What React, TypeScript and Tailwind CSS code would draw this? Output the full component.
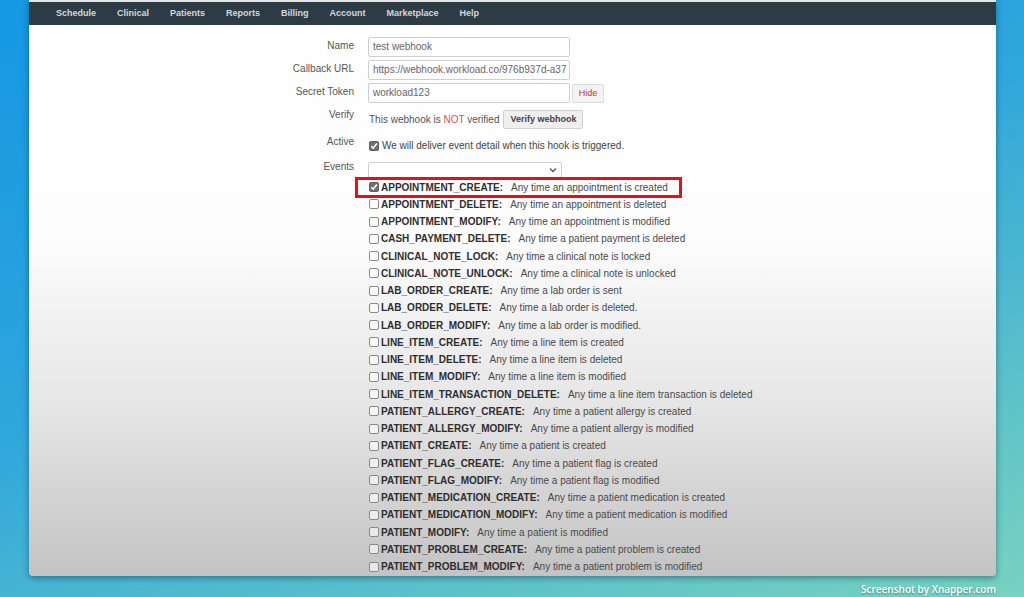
import React from "react";

const events: [string, string][] = [
  ["APPOINTMENT_CREATE", "Any time an appointment is created"],
  ["APPOINTMENT_DELETE", "Any time an appointment is deleted"],
  ["APPOINTMENT_MODIFY", "Any time an appointment is modified"],
  ["CASH_PAYMENT_DELETE", "Any time a patient payment is deleted"],
  ["CLINICAL_NOTE_LOCK", "Any time a clinical note is locked"],
  ["CLINICAL_NOTE_UNLOCK", "Any time a clinical note is unlocked"],
  ["LAB_ORDER_CREATE", "Any time a lab order is sent"],
  ["LAB_ORDER_DELETE", "Any time a lab order is deleted."],
  ["LAB_ORDER_MODIFY", "Any time a lab order is modified."],
  ["LINE_ITEM_CREATE", "Any time a line item is created"],
  ["LINE_ITEM_DELETE", "Any time a line item is deleted"],
  ["LINE_ITEM_MODIFY", "Any time a line item is modified"],
  ["LINE_ITEM_TRANSACTION_DELETE", "Any time a line item transaction is deleted"],
  ["PATIENT_ALLERGY_CREATE", "Any time a patient allergy is created"],
  ["PATIENT_ALLERGY_MODIFY", "Any time a patient allergy is modified"],
  ["PATIENT_CREATE", "Any time a patient is created"],
  ["PATIENT_FLAG_CREATE", "Any time a patient flag is created"],
  ["PATIENT_FLAG_MODIFY", "Any time a patient flag is modified"],
  ["PATIENT_MEDICATION_CREATE", "Any time a patient medication is created"],
  ["PATIENT_MEDICATION_MODIFY", "Any time a patient medication is modified"],
  ["PATIENT_MODIFY", "Any time a patient is modified"],
  ["PATIENT_PROBLEM_CREATE", "Any time a patient problem is created"],
  ["PATIENT_PROBLEM_MODIFY", "Any time a patient problem is modified"],
];

const nav = ["Schedule", "Clinical", "Patients", "Reports", "Billing", "Account", "Marketplace", "Help"];

function Box({ checked }: { checked?: boolean }) {
  return checked ? (
    <span className="w-[10px] h-[10px] rounded-[2px] bg-[#707070] border border-[#606060] flex items-center justify-center shrink-0">
      <svg width="8" height="8" viewBox="0 0 8 8">
        <path d="M1.2 4.2 L3.2 6.1 L6.9 1.6" stroke="#fff" strokeWidth="1.5" fill="none" />
      </svg>
    </span>
  ) : (
    <span className="w-[10px] h-[10px] rounded-[2px] bg-white/60 border border-[#8a8a8a] shrink-0" />
  );
}

export default function App() {
  return (
    <div
      className="w-[1024px] h-[597px] overflow-hidden bg-[linear-gradient(160deg,#1597e3_0%,#2fa6dc_45%,#5fc3c8_80%,#78d2c0_100%)] pl-[29px] flex flex-col"
      style={{ fontFamily: '"Liberation Sans", Arial, sans-serif' }}
    >
      <div className="w-[967px] h-[576px] shrink-0 flex flex-col overflow-hidden rounded-b-[4px] shadow-[0_2px_6px_rgba(0,40,60,0.45)] bg-[linear-gradient(180deg,#ffffff_0%,#fdfdfd_40%,#e6e6e6_70%,#c3c3c3_100%)] border-t-[2px] border-[#e4e6e8]">
        <div className="h-[23px] bg-[#2d3b45] flex items-center pl-[27px] gap-[21px] shrink-0">
          {nav.map((n) => (
            <span key={n} className="text-[9px] font-bold text-[#d3d8dc] leading-none">
              {n}
            </span>
          ))}
        </div>

        <div className="pt-[12px] flex flex-col text-[10px] text-[#555]">
          {/* Name */}
          <div className="flex gap-[14px] h-[23px]">
            <div className="w-[325px] text-right leading-[17px] text-[#555]">Name</div>
            <div className="w-[202px] h-[20px] border border-[#cfcfcf] rounded-[2px] bg-white px-[4px] leading-[18px] text-[#666] overflow-hidden whitespace-nowrap">
              test webhook
            </div>
          </div>
          {/* Callback */}
          <div className="flex gap-[14px] h-[23px]">
            <div className="w-[325px] text-right leading-[17px]">Callback URL</div>
            <div className="w-[202px] h-[20px] border border-[#cfcfcf] rounded-[2px] bg-white px-[4px] leading-[18px] text-[#666] overflow-hidden whitespace-nowrap">
              https://webhook.workload.co/976b937d-a37
            </div>
          </div>
          {/* Secret */}
          <div className="flex gap-[14px] h-[23px]">
            <div className="w-[325px] text-right leading-[17px]">Secret Token</div>
            <div className="flex gap-[2px]">
              <div className="w-[202px] h-[20px] border border-[#cfcfcf] rounded-[2px] bg-white px-[4px] leading-[18px] text-[#666] overflow-hidden whitespace-nowrap">
                workload123
              </div>
              <div className="w-[32px] h-[19px] mt-[1px] border border-[#dcdcdc] rounded-[2px] bg-[#f3f3f3] text-[#c0392b] text-[9px] flex items-center justify-center">
                Hide
              </div>
            </div>
          </div>
          {/* Verify */}
          <div className="flex gap-[14px] h-[27px]">
            <div className="w-[325px] text-right leading-[17px]">Verify</div>
            <div className="flex items-center h-[19px] mt-[4px] pl-[1px]">
              <span>
                This webhook is <span className="text-[#d9534f]">NOT</span> verified
              </span>
              <span className="ml-[4px] h-[19px] px-[6px] border border-[#d0d0d0] rounded-[2px] bg-[#efefef] text-[9px] font-bold text-[#444] flex items-center">
                Verify webhook
              </span>
            </div>
          </div>
          {/* Active */}
          <div className="flex gap-[14px] h-[25px]">
            <div className="w-[325px] text-right leading-[17px]">Active</div>
            <div className="flex items-center gap-[3px] h-[17px] mt-[4px] pl-[1px]">
              <Box checked />
              <span className="text-[#444]">We will deliver event detail when this hook is triggered.</span>
            </div>
          </div>
          {/* Events */}
          <div className="flex gap-[14px] h-[20.4px]">
            <div className="w-[325px] text-right leading-[17px]">Events</div>
            <div className="w-[194px] h-[16px] mt-[4px] border border-[#cfcfcf] rounded-[2px] bg-white flex items-center justify-end pr-[4px]">
              <svg width="8" height="6" viewBox="0 0 8 6">
                <path d="M1 1.5 L4 4.5 L7 1.5" stroke="#555" strokeWidth="1.3" fill="none" />
              </svg>
            </div>
          </div>

          {/* Event list */}
          <div className="flex gap-[14px]">
            <div className="w-[325px]" />
            <div className="relative flex flex-col pl-[1px]">
              {events.map(([k, d], i) => (
                <div key={k} className="h-[17.25px] flex items-center gap-[2px] whitespace-nowrap">
                  <Box checked={i === 0} />
                  <span className="font-bold text-[#2e2e2e]">{k}:</span>
                  <span className="ml-[6px] text-[#4a4a4a]">{d}</span>
                </div>
              ))}
              <div className="absolute left-[-13px] top-[-1.5px] w-[327px] h-[21px] border-[3px] border-[#e3101a]" />
            </div>
          </div>
        </div>
      </div>
      <div className="w-[967px] flex justify-end pt-[8px]">
        <span className="text-[10px] font-semibold text-white leading-none [text-shadow:0_1px_2px_rgba(0,0,0,0.35)]" style={{ fontFamily: '"Open Sans", sans-serif' }}>
          Screenshot by Xnapper.com
        </span>
      </div>
    </div>
  );
}
